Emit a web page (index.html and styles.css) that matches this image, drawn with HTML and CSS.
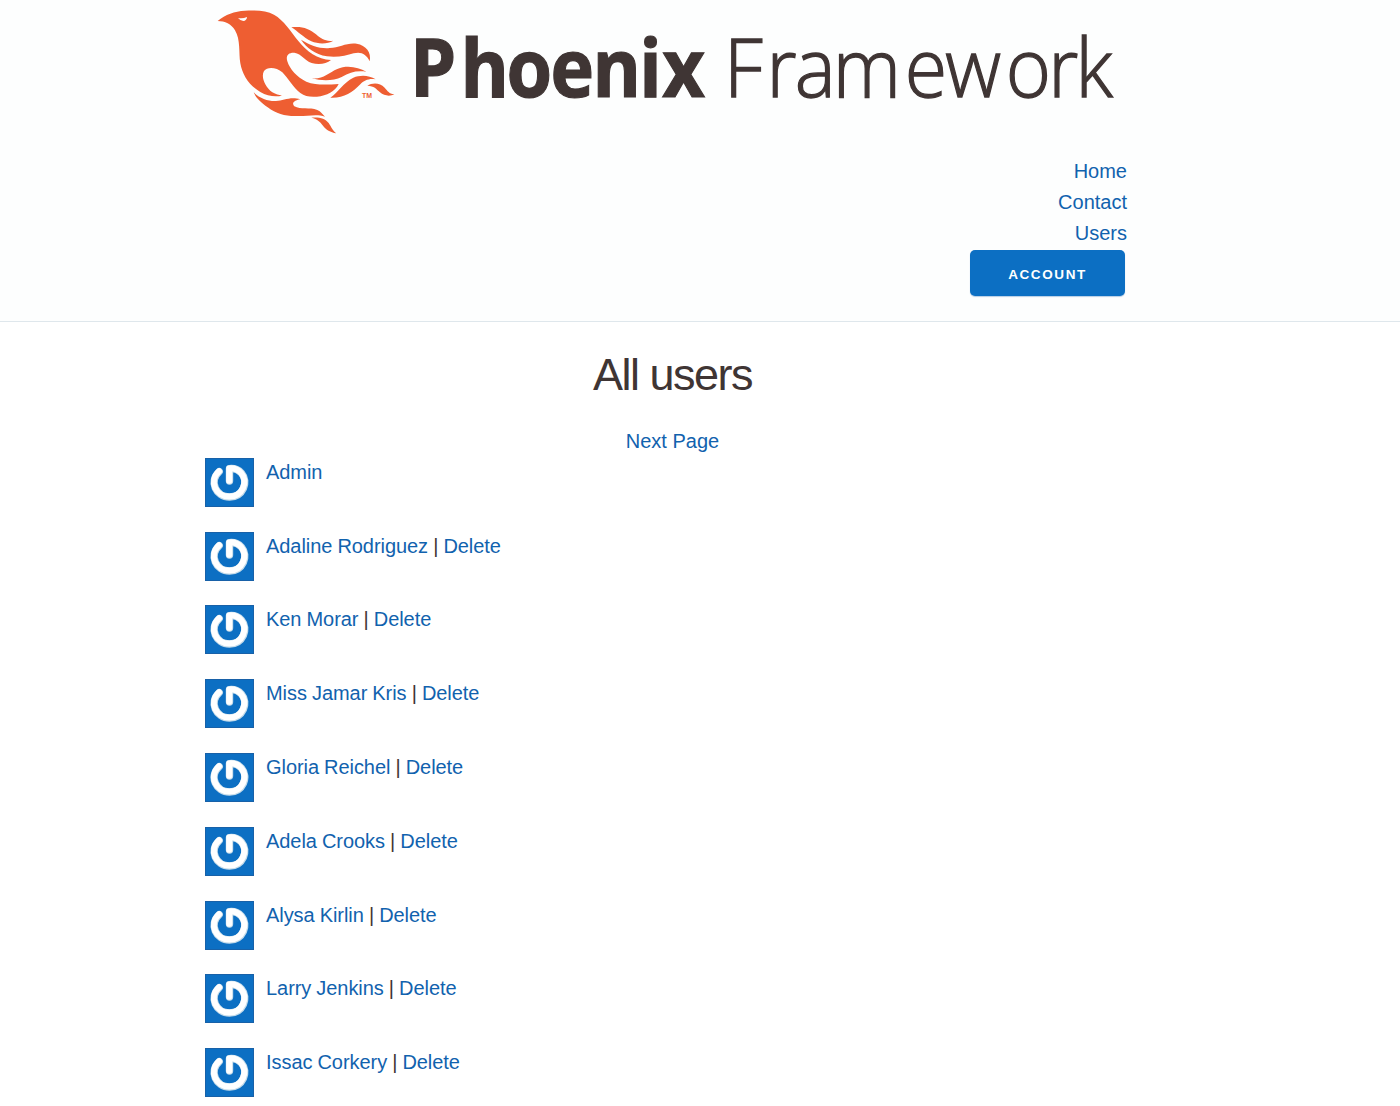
FILE: index.html
```html
<!DOCTYPE html>
<html lang="en">
<head>
<meta charset="utf-8">
<title>All users · Phoenix Framework</title>
<link rel="stylesheet" href="styles.css">
</head>
<body>
<svg class="defs" width="0" height="0" aria-hidden="true">
  <symbol id="avatar" viewBox="0 0 49 49">
    <rect width="49" height="49" fill="#0c6fc3"/>
    <rect x=".5" y=".5" width="48" height="48" fill="none" stroke="#1861a8"/>
    <path d="M14.2 13.6C3.5 23.5 11 39 24.5 39S44 24 36.5 15.2C33 11.2 29 10.2 24.5 10.6V23" fill="none" stroke="#c5dcea" stroke-width="7.4" stroke-linecap="round" stroke-linejoin="round"/>
    <path d="M14 13.3C3.3 23.2 10.8 38.6 24.2 38.6S43.5 23.7 36 14.9C32.7 11 28.6 10 24.2 10.4V22.7" fill="none" stroke="#fff" stroke-width="6" stroke-linecap="round" stroke-linejoin="round"/>
  </symbol>
</svg>
<header class="header">
  <div class="container">
    <a class="logo" href="#" aria-label="Phoenix Framework">
      <svg width="935" height="140" viewBox="0 0 935 140">
        <g transform="scale(.333333)" fill="#ee5e32">
          <path fill-rule="evenodd" d="M38 63C62 43 88 34 120 32C155 30 185 32 207 44C237 61 257 94 280 123C305 154 337 179 378 180C364 192 341 195 320 189C298 181 291 162 268 158C249 157 242 168 247 184C254 207 276 232 304 245C334 257 367 254 401 252C390 275 366 287 336 290C315 291 300 290 286 279C264 262 250 235 232 217C215 202 187 199 177 213C167 231 180 260 202 277C213 284 221 284 231 287C209 292 187 288 166 276C132 256 112 225 106 190C101 158 107 119 90 91C79 72 60 63 38 63ZM99 54Q113 57 126 51Q125 62 115 63Q105 61 99 54Z"/>
          <path d="M259 82C291 78 313 86 333 103C349 117 361 125 385 122C369 132 341 133 319 124C294 112 279 94 259 82Z"/>
          <path d="M288 119C316 136 346 147 374 144C404 143 425 127 455 131C483 136 500 157 494 184C484 162 468 154 446 160C423 167 397 173 366 169C329 163 305 143 288 119Z"/>
          <path d="M321 235C353 239 371 218 397 207C428 194 461 203 484 215C453 211 435 217 410 231C384 244 348 243 321 235Z"/>
          <path d="M376 293C400 276 415 248 445 233C466 224 492 225 512 238C490 235 477 242 466 253C442 278 415 295 376 293Z"/>
          <path d="M487 257C502 248 524 247 539 263C548 273 554 283 568 282C555 291 537 287 525 277C513 266 508 258 487 257Z"/>
          <path d="M146 277C165 295 189 304 213 303C236 303 254 289 286 298C267 301 259 310 268 319C287 330 313 321 337 330C348 335 352 342 360 350C338 341 309 348 282 348C246 350 216 344 188 322C169 308 152 293 146 277Z"/>
          <path d="M319 353C343 351 360 355 371 369C379 380 382 392 394 400C376 396 363 390 354 377C344 364 337 357 319 353Z"/>
        </g>
        <text class="logo-tm" x="157" y="98" textLength="10" lengthAdjust="spacingAndGlyphs">TM</text>
        <text class="logo-bold" transform="translate(205 97) scale(.91 1)" dx="0 4.5 -2.5 -2 -1.5 -2 .5">Phoenix</text>
        <text class="logo-light" transform="translate(519 97) scale(.953 1)" dx="0 4 -2 -3 4 -2 5 -3 -3">Framework</text>
      </svg>
    </a>
    <nav class="nav">
      <a href="#">Home</a>
      <a href="#">Contact</a>
      <a href="#">Users</a>
      <button class="button" type="button">ACCOUNT</button>
    </nav>
  </div>
</header>
<main class="container">
  <h1 class="title">All users</h1>
  <div class="pagination"><a href="#">Next Page</a></div>
  <ul class="users">
    <li><svg class="avatar"><use href="#avatar"/></svg><p><a href="#">Admin</a></p></li>
    <li><svg class="avatar"><use href="#avatar"/></svg><p><a href="#">Adaline Rodriguez</a> | <a href="#">Delete</a></p></li>
    <li><svg class="avatar"><use href="#avatar"/></svg><p><a href="#">Ken Morar</a> | <a href="#">Delete</a></p></li>
    <li><svg class="avatar"><use href="#avatar"/></svg><p><a href="#">Miss Jamar Kris</a> | <a href="#">Delete</a></p></li>
    <li><svg class="avatar"><use href="#avatar"/></svg><p><a href="#">Gloria Reichel</a> | <a href="#">Delete</a></p></li>
    <li><svg class="avatar"><use href="#avatar"/></svg><p><a href="#">Adela Crooks</a> | <a href="#">Delete</a></p></li>
    <li><svg class="avatar"><use href="#avatar"/></svg><p><a href="#">Alysa Kirlin</a> | <a href="#">Delete</a></p></li>
    <li><svg class="avatar"><use href="#avatar"/></svg><p><a href="#">Larry Jenkins</a> | <a href="#">Delete</a></p></li>
    <li><svg class="avatar"><use href="#avatar"/></svg><p><a href="#">Issac Corkery</a> | <a href="#">Delete</a></p></li>
  </ul>
</main>
</body>
</html>
```
FILE: styles.css
```css
* { box-sizing: border-box; }
body {
  margin: 0;
  height: 1106px;
  overflow: hidden;
  background: #fff;
  color: #3f3534;
  font: 20px/30.8px "Liberation Sans", Arial, sans-serif;
}
a { color: #1162ae; text-decoration: none; }
.defs { display: block; height: 0; }
.container { width: 935px; margin-left: 205px; }
.header {
  height: 322px;
  background: #fdfefe;
  border-bottom: 1px solid #dfe7ec;
}
.logo { display: block; height: 156px; }
.logo svg { display: block; overflow: visible; }
.logo-bold, .logo-light { font-family: "Open Sans", sans-serif; font-size: 81px; fill: #3f3534; stroke: #3f3534; }
.logo-bold { font-weight: 700; stroke-width: 1.2px; }
.logo-light { font-weight: 300; stroke-width: 1.3px; }
.logo-tm { font: bold 7px "Liberation Sans", sans-serif; fill: #ee5e32; }
.nav {
  display: flex;
  flex-direction: column;
  align-items: flex-end;
  padding-right: 13px;
}
.button {
  width: 155px;
  height: 46px;
  margin: 2px 2px 0 0;
  padding: 2px 0 0;
  border: 0;
  border-radius: 5px;
  background: #0c6fc3;
  box-shadow: 0 1px 1px #b5cce5;
  color: #fff;
  font: bold 13.5px "Liberation Sans", Arial, sans-serif;
  letter-spacing: 1.6px;
}
.title {
  margin: 23px 0 0;
  font-size: 45px;
  font-weight: 400;
  line-height: 60px;
  letter-spacing: -1.5px;
  text-align: center;
}
.pagination { margin-top: 21px; text-align: center; }
.users { margin: 1px 0 0; padding: 0; list-style: none; }
.users li { display: flex; gap: 12px; height: 73.8px; }
.users p { margin: -1px 0 0; white-space: nowrap; letter-spacing: -.06px; word-spacing: -.4px; }
.avatar { width: 49px; height: 49px; flex: none; }
```
